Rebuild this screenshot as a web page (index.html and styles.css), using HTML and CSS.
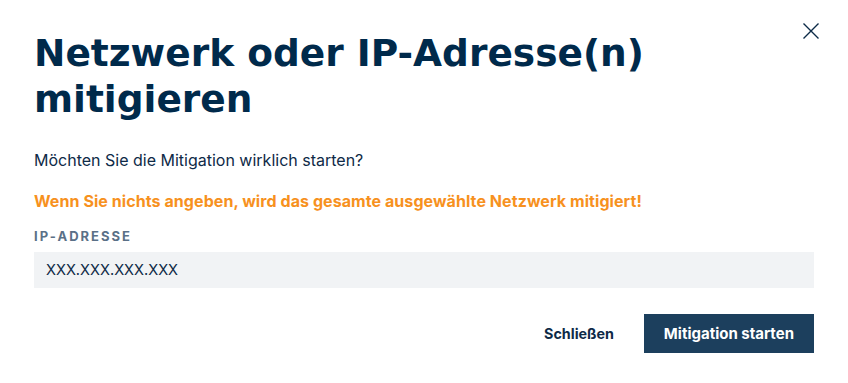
FILE: index.html
```html
<!DOCTYPE html>
<html lang="de">
<head>
<meta charset="utf-8">
<title>Mitigation</title>
<link rel="stylesheet" href="styles.css">
</head>
<body>
<div class="modal">
  <button class="close" aria-label="Schließen">
    <svg width="16" height="16" viewBox="0 0 16 16"><path d="M0.5 0.5 L15.5 15.5 M15.5 0.5 L0.5 15.5" stroke="#0b2a47" stroke-width="1.4" fill="none"/></svg>
  </button>
  <h1 class="title">Netzwerk oder IP-Adresse(n) mitigieren</h1>
  <p class="question">Möchten Sie die Mitigation wirklich starten?</p>
  <p class="warning">Wenn Sie nichts angeben, wird das gesamte ausgewählte Netzwerk mitigiert!</p>
  <label class="label" for="ip">IP-ADRESSE</label>
  <input class="input" id="ip" type="text" value="XXX.XXX.XXX.XXX">
  <div class="actions">
    <button class="btn-link">Schließen</button>
    <button class="btn-primary">Mitigation starten</button>
  </div>
</div>
</body>
</html>
```
FILE: styles.css
```css
html, body {
  margin: 0;
  padding: 0;
  background: #ffffff;
}
.modal {
  position: relative;
  padding: 30px 34px 0 34px;
  font-family: Inter, "Liberation Sans", sans-serif;
  color: #0e2a47;
}
.close {
  position: absolute;
  top: 23px;
  right: 29px;
  width: 16px;
  height: 16px;
  padding: 0;
  border: 0;
  background: none;
  cursor: pointer;
  display: flex;
}
.title {
  margin: 0;
  font-family: "DejaVu Sans", sans-serif;
  font-weight: 700;
  font-size: 37.5px;
  line-height: 46px;
  color: #002a4b;
  max-width: 700px;
}
.question {
  margin: 26px 0 0 0;
  font-size: 16px;
  line-height: 24px;
  color: #0e2a47;
}
.warning {
  margin: 17px 0 0 0;
  font-size: 16px;
  line-height: 24px;
  font-weight: 700;
  letter-spacing: 0.07px;
  color: #f7911e;
}
.label {
  display: block;
  margin-top: 15px;
  font-size: 13px;
  line-height: 16px;
  font-weight: 700;
  letter-spacing: 2px;
  color: #5a7087;
}
.input {
  display: block;
  box-sizing: border-box;
  width: 100%;
  height: 36px;
  margin-top: 8px;
  padding: 0 12px;
  border: 0;
  background: #f1f3f5;
  font-family: Inter, "Liberation Sans", sans-serif;
  font-size: 14.6px;
  color: #0e2a47;
  outline: none;
}
.actions {
  display: flex;
  justify-content: flex-end;
  align-items: center;
  gap: 30px;
  margin-top: 26px;
}
.btn-link {
  border: 0;
  background: none;
  padding: 0;
  font-family: Inter, "Liberation Sans", sans-serif;
  font-size: 14.3px;
  font-weight: 700;
  color: #0e2a47;
}
.btn-primary {
  height: 39px;
  padding: 0 20px;
  border: 0;
  background: #1c3f5d;
  color: #ffffff;
  font-family: Inter, "Liberation Sans", sans-serif;
  font-size: 15px;
  font-weight: 700;
}
```
